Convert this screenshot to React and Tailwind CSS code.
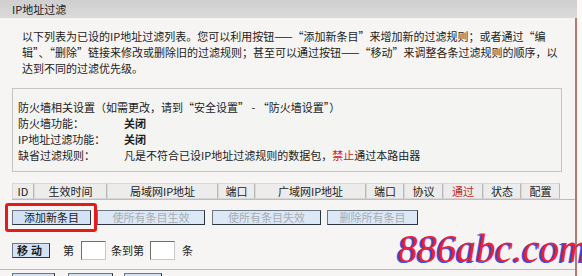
const cjk = "font-['SimSun','Noto_Sans_CJK_SC',sans-serif]";

function Btn({ children, disabled, className = "" }) {
  return (
    <div
      className={`h-[15px] flex items-center justify-center border border-t-[#6b7785] border-l-[#6b7785] border-r-[#2c3440] border-b-[#2c3440] text-[11px] leading-none ${
        disabled ? "bg-[#dce8f5] text-[#a7adb5]" : "bg-[#d3e2f4] text-[#1a1a1a]"
      } ${className}`}
    >
      {children}
    </div>
  );
}

function Input({ className = "" }) {
  return (
    <div
      className={`h-[19px] w-[25px] bg-white border border-t-[#6e6e6e] border-l-[#6e6e6e] border-r-[#c9c9c9] border-b-[#c9c9c9] ${className}`}
    />
  );
}

const cols = [
  { label: "ID", w: "w-[22px]" },
  { label: "生效时间", w: "w-[73px]" },
  { label: "局域网IP地址", w: "w-[111px]" },
  { label: "端口", w: "w-[37px]" },
  { label: "广域网IP地址", w: "w-[111px]" },
  { label: "端口", w: "w-[38px]" },
  { label: "协议", w: "w-[39px]" },
  { label: "通过", w: "w-[40px]", red: true },
  { label: "状态", w: "w-[38px]" },
  { label: "配置", w: "w-[39px]" },
];

export default function App() {
  return (
    <div className={`relative w-[582px] h-[276px] overflow-hidden bg-[#fbf8f7] text-[#222] ${cjk}`}>
      <div className="w-[577px] h-full flex flex-col">
        <div className="h-[18px] shrink-0 bg-gradient-to-b from-[#cfcfcf] to-[#dadada] pl-[12px] flex items-center text-[11px] text-[#222]">
          IP地址过滤
        </div>
        <div className="flex-1 bg-[#f6f5f3] border-r-2 border-[#b07a72]">
          <div className="pl-[22px] pt-[10px] text-[11px] leading-[16px] whitespace-nowrap">
            以下列表为已设的IP地址过滤列表。您可以利用按钮——“添加新条目”来增加新的过滤规则；或者通过“编
            <br />
            辑”、“删除”链接来修改或删除旧的过滤规则；甚至可以通过按钮——“移动”来调整各条过滤规则的顺序，以
            <br />
            达到不同的过滤优先级。
          </div>

          <div className="mt-[12px] ml-[12px] w-[550px] h-[84px] border border-[#c4c4c4] bg-[#f4f4f3] pt-[10px] pl-[5px] text-[11px] leading-[16px] whitespace-nowrap">
            <div>防火墙相关设置（如需更改，请到“安全设置” - “防火墙设置”）</div>
            <div className="flex">
              <span className="w-[106px]">防火墙功能：</span>
              <span className="font-bold">关闭</span>
            </div>
            <div className="flex">
              <span className="w-[106px]">IP地址过滤功能：</span>
              <span className="font-bold">关闭</span>
            </div>
            <div className="flex">
              <span className="w-[106px]">缺省过滤规则：</span>
              <span>
                凡是不符合已设IP地址过滤规则的数据包，<span className="text-[#d02020]">禁止</span>通过本路由器
              </span>
            </div>
          </div>

          <div className="mt-[11px] ml-[12px] flex h-[17px] border-b border-[#bdbdbd]">
            {cols.map((c, i) => (
              <div
                key={i}
                className={`${c.w} h-full flex items-center justify-center bg-[#ececec] border border-[#d8d8d8] border-r-[#b9b9b9] text-[11px] ${
                  c.red ? "text-[#c02828]" : "text-[#222]"
                }`}
              >
                {c.label}
              </div>
            ))}
          </div>

          <div className="mt-[10px] ml-[12px] flex">
            <div className="relative">
              <Btn className="w-[79px]">添加新条目</Btn>
              <span className="absolute -left-[7px] -top-[7px] -right-[6px] -bottom-[7px] border-[3px] border-[#e21b1b] rounded-[3px]" />
            </div>
            <Btn disabled className="w-[108px] ml-[6px]">使所有条目生效</Btn>
            <Btn disabled className="w-[109px] ml-[7px]">使所有条目失效</Btn>
            <Btn disabled className="w-[91px] ml-[6px]">删除所有条目</Btn>
          </div>

          <div className="mt-[16px] ml-[12px] flex items-center h-[19px] text-[11px]">
            <Btn className="w-[38px] font-bold tracking-[3px]">移动</Btn>
            <span className="ml-[13px]">第</span>
            <Input className="ml-[7px]" />
            <span className="ml-[5px]">条到第</span>
            <Input className="ml-[6px]" />
            <span className="ml-[7px]">条</span>
          </div>

          <div className="mt-[9px] border-t border-[#c2b8b6]" />
          <div className="mt-[3px] ml-[12px] flex">
            <Btn className="w-[43px]" />
            <Btn className="w-[45px] ml-[13px]" />
            <Btn className="w-[38px] ml-[11px]" />
          </div>
        </div>
      </div>

      <div className="absolute left-[395px] top-[228px] px-[3px] text-[39px] leading-[42px] italic text-[#ee1f3a] font-['Liberation_Serif',serif] [text-shadow:-2px_1px_0_#3a52e6] whitespace-nowrap">
        886abc.com
      </div>
    </div>
  );
}
